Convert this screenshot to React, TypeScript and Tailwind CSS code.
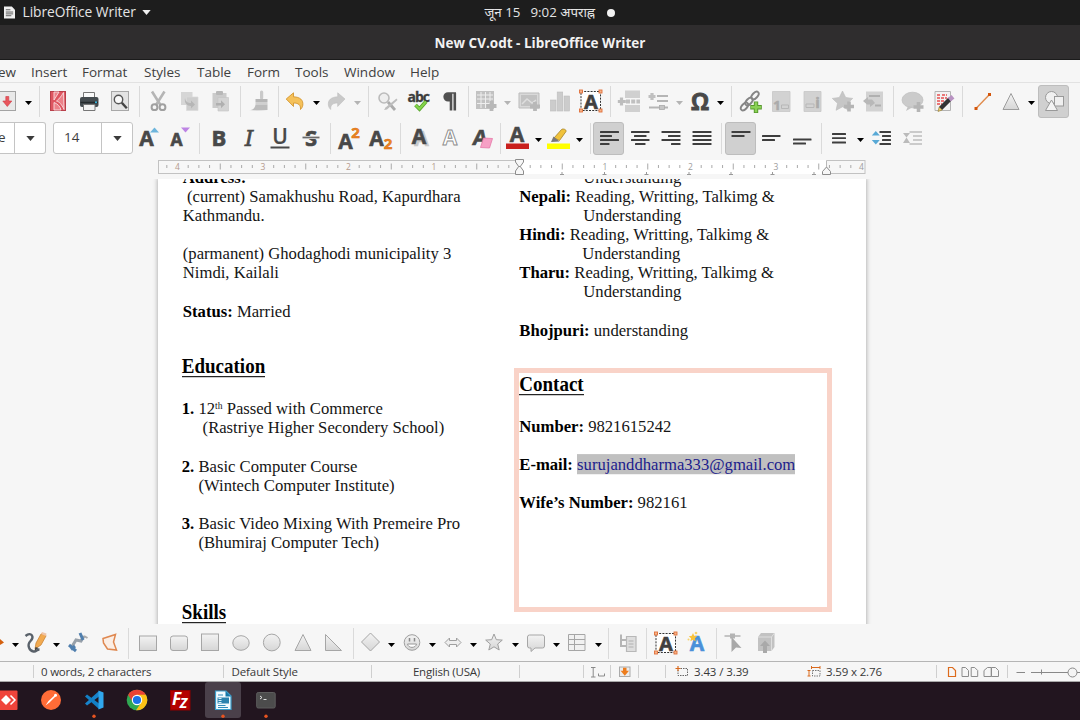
import React from "react";

type Kids = { children?: React.ReactNode; className?: string };

const UI = "font-['Open_Sans','Noto_Sans',sans-serif]";

function Icon({ children, className = "" }: Kids) {
  return (
    <svg viewBox="0 0 24 24" className={`mt-1 h-6 w-6 shrink-0 overflow-visible ${className}`} fill="none">
      {children}
    </svg>
  );
}

function Sep({ className = "" }: Kids) {
  return <span className={`mt-px h-[31px] w-px shrink-0 bg-[#dadada] ${className}`} />;
}

function Drop({ className = "", dim = false }: Kids & { dim?: boolean }) {
  return (
    <svg viewBox="0 0 8 24" className={`mt-1 h-6 w-2 shrink-0 ${className}`}>
      <path d="M1 12h7L4.500 16z" fill={dim ? "#b4b4b4" : "#000"} />
    </svg>
  );
}

function Pressed({ children, className = "" }: Kids) {
  return (
    <span className={`flex h-[33px] w-[31px] shrink-0 justify-center rounded-[3px] border border-[#bdbdbd] bg-[#d0d0d0] ${className}`}>
      {children}
    </span>
  );
}

function Glyph({ x, y, size, fill = "#484848", children, ...rest }: { x: number; y: number; size: number; fill?: string; children: React.ReactNode } & React.SVGProps<SVGTextElement>) {
  return (
    <text x={x} y={y} fontSize={size} fill={fill} stroke={fill} strokeWidth=".6" fontWeight="700" textAnchor="middle" fontFamily="'Open Sans', 'DejaVu Sans', sans-serif" {...rest}>
      {children}
    </text>
  );
}

function Bars({ rows }: { rows: [number, number, number][] }) {
  return (
    <>
      {rows.map(([x, y, w]) => (
        <rect key={y} x={x} y={y} width={w} height="1.9" rx=".5" fill="#3e3e3e" />
      ))}
    </>
  );
}

function TextBoxIcon({ className = "" }: Kids) {
  return (
    <Icon className={className}>
      <rect x="2" y="2.500" width="19.500" height="19" fill="#fff" stroke="#333" strokeDasharray="2 1.200" />
      <Glyph x={12} y={19.500} size={20} fill="#404040">A</Glyph>
      {[[2, 2.5], [21.5, 2.5], [2, 21.5], [21.5, 21.500]].map(([x, y]) => (
        <rect key={`${x}-${y}`} x={x - 1.5} y={y - 1.5} width="3" height="3" fill="#f6b48a" stroke="#e0703a" strokeWidth=".9" />
      ))}
    </Icon>
  );
}

function StandardToolbar() {
  return (
    <div className="flex h-[37px] shrink-0 items-start pt-0.5">
      <Icon className="-ml-1">
        <rect x="3" y="2.500" width="16.500" height="19" fill="#e9e9e9" stroke="#a3a3a3" />
        <path d="M9.800 7.500h3v4.500h3L11.300 17.500 6.800 12h3z" fill="#e8555c" stroke="#cf3a44" strokeWidth=".6" />
      </Icon>
      <Drop className="ml-1" />
      <Sep className="ml-[7px]" />
      <Icon className="ml-1.5">
        <rect x="4.500" y="2.500" width="15" height="19" fill="#de5560" stroke="#b9404b" />
        <path d="M8 3v8l5-8zM8 13.500V21h7c-.5-3-3.500-6.500-7-7.500zM17.500 3.500c-3 5-5 7-7 8.500 3 1 5 3 7.500 8.500z" fill="#f08d94" stroke="#fff" strokeWidth=".9" opacity=".8" />
      </Icon>
      <Icon className="ml-[7px]">
        <path d="M6.500 9V3.500h11V9" fill="#fafafa" stroke="#777" />
        <rect x="3" y="8" width="18.500" height="10" rx="2" fill="#454c50" />
        <path d="M3.500 13.500h17.500" stroke="#252a2c" strokeWidth="1.500" />
        <path d="M6.500 15.500h11.500v6H6.500z" fill="#f2f2f2" stroke="#777" />
        <circle cx="19" cy="13.300" r="1" fill="#38c3ee" />
      </Icon>
      <Icon className="ml-[7px]">
        <rect x="3.500" y="2.500" width="17" height="19" fill="#e4e4e4" stroke="#a8a8a8" />
        <circle cx="10.500" cy="10.500" r="4.200" fill="#fafafa" stroke="#555" strokeWidth="1.400" />
        <path d="m13.800 13.800 5 5.500" stroke="#444" strokeWidth="2.400" />
      </Icon>
      <Sep className="ml-[7px]" />
      <Icon className="ml-1.5">
        <path d="M6 2.500 14.500 16M18.500 2.500 10 16" stroke="#b5b5b5" strokeWidth="2.600" />
        <circle cx="8.500" cy="18.200" r="2.900" stroke="#a0a0a0" strokeWidth="2" />
        <circle cx="16.500" cy="18.200" r="2.900" stroke="#a0a0a0" strokeWidth="2" />
      </Icon>
      <Icon className="ml-2">
        <path d="M3 3h11.500v13H3z" fill="#d6d6d6" />
        <path d="M8.500 8h11.500v13.500H8.500z" fill="#cdcdcd" stroke="#dadada" strokeWidth=".7" />
        <path d="M7 9c.5 4 3 5 6 5v-2.500l4 4-4 4V17c-4 0-7-3-6-8z" fill="#b6b6b6" />
      </Icon>
      <Icon className="ml-1.5">
        <path d="M4.500 4h14v15h-14z" fill="#cbcbcb" />
        <rect x="8" y="2" width="7" height="4" rx="1" fill="#b8b8b8" />
        <path d="M10 8.500h10.500V22H10z" fill="#d4d4d4" stroke="#c2c2c2" strokeWidth=".6" />
        <path d="M8 14h5v-2.800l4 4-4 4v-2.700H8z" fill="#b0b0b0" />
      </Icon>
      <Sep className="ml-2" />
      <Icon className="ml-[7px]">
        <rect x="12" y="1.500" width="3.200" height="9" rx="1.500" fill="#c9c9c9" />
        <path d="M7.500 10h12v3h-12z" fill="#b6b6b6" />
        <path d="M7.500 13h12v2.500h-12z" fill="#d0d0d0" />
        <path d="M7.500 15.500h12V21H3c3-1 4-2.500 4.500-5.500z" fill="#bcbcbc" />
        <path d="M1 22c7-1 12-1 18.500 0z" fill="#d8d8d8" />
      </Icon>
      <Sep className="ml-1.5" />
      <Icon className="ml-1">
        <path d="M3.200 10 10.500 3.800v4C17 8 20.500 11 19.800 16.200c-.3 1.800-1 3-2.300 4.300.3-4.500-2-6.500-7-6.500v3.500z" fill="#f5c15a" stroke="#cf8e22" strokeWidth=".8" />
      </Icon>
      <Drop className="ml-[5px]" />
      <Icon className="ml-1">
        <path d="M21 10 13.700 3.800v4C7.200 8 3.700 11 4.400 16.200c.3 1.800 1 3 2.300 4.300-.3-4.500 2-6.500 7-6.500v3.500z" fill="#c9c9c9" stroke="#bdbdbd" strokeWidth=".6" />
      </Icon>
      <Drop className="ml-[5px]" dim />
      <Sep className="ml-[7px]" />
      <Icon className="ml-[7px]">
        <circle cx="8" cy="9" r="5" fill="#eee" stroke="#bbb" strokeWidth="1.600" />
        <path d="m12 13 7 8" stroke="#ababab" strokeWidth="2.800" />
        <path d="M20.500 9.500 9.500 18.500l-1.500 2.500 3-.5L21.500 11z" fill="#bdbdbd" />
      </Icon>
      <Icon className="ml-1.5">
        <Glyph x={12.200} y={13} size={14} fill="#3c3c3c" letterSpacing="-1" strokeWidth=".3">abc</Glyph>
        <path d="m9.500 16 4 4L20 12.500" stroke="#58a52e" strokeWidth="3.800" />
        <path d="m9.500 16 4 4L20 12.500" stroke="#84d44b" strokeWidth="2.200" />
      </Icon>
      <Icon className="ml-[7px]">
        <path d="M17.800 4v17.500M14 4v17.500" stroke="#505050" strokeWidth="2.600" />
        <path d="M19 3.200H11a4.600 4.600 0 0 0 0 9.300h3V4.800h5z" fill="#505050" />
      </Icon>
      <Sep className="ml-[7px]" />
      <Icon className="ml-[5px]">
        <path d="M2 2h18v18H2z" fill="#c2c2c2" />
        <path d="M3 6h16M3 10h16M3 14.500h16M7 3v16M11.500 3v16M16 3v16" stroke="#eee" />
        <path d="M17.500 12v10M12.500 17h10" stroke="#b8b8b8" strokeWidth="3.800" />
      </Icon>
      <Drop className="ml-[5px]" dim />
      <Icon className="ml-1.5">
        <path d="M2 4h20v15H2z" fill="#d9d9d9" stroke="#bbb" />
        <path d="M4 6h16v11H4z" fill="#c2c2c2" />
        <path d="m5 15 5-5 5 4 4-3" stroke="#dedede" strokeWidth="1.500" />
        <path d="M18 13v9M13 17.500h10" stroke="#b8b8b8" strokeWidth="3.800" />
      </Icon>
      <Icon className="ml-[7px]">
        <rect x="2.500" y="11" width="5.500" height="11" fill="#ccc" stroke="#bdbdbd" strokeWidth=".6" />
        <rect x="9.200" y="3" width="5.500" height="19" fill="#ccc" stroke="#bdbdbd" strokeWidth=".6" />
        <rect x="16" y="7" width="5.500" height="15" fill="#ccc" stroke="#bdbdbd" strokeWidth=".6" />
      </Icon>
      <TextBoxIcon className="ml-[7px]" />
      <Sep className="ml-[7px]" />
      <Icon className="ml-1.5">
        <path d="M8 1.500h15V9H8zM8 16h15v7H8z" fill="#d0d0d0" />
        <path d="M9 12.500h14" stroke="#c0c0c0" strokeWidth="4" strokeDasharray="4 1.200" />
        <path d="M4.500 8.500v8M.8 12.500h8" stroke="#bdbdbd" strokeWidth="3.200" />
      </Icon>
      <Icon className="ml-[5px]">
        <path d="M11 7h11M11 12h11M3 18.500h19" stroke="#b5b5b5" strokeWidth="2" />
        <path d="M6 4v7M2.500 7.500h7" stroke="#c0c0c0" strokeWidth="3.200" />
        <rect x="13.500" y="16.500" width="5" height="4" fill="#c5c5c5" stroke="#aaa" strokeWidth=".8" />
      </Icon>
      <Drop className="ml-[5px]" dim />
      <Icon className="ml-[5px]">
        <Glyph x={12} y={21} size={23} strokeWidth=".8">Ω</Glyph>
      </Icon>
      <Drop className="ml-1" />
      <Sep className="ml-[7px]" />
      <Icon className="ml-1.5">
        {[[6.5, 17.5], [11, 12.5], [17, 6.500]].map(([x, y]) => (
          <ellipse key={x} cx={x} cy={y} rx="4.600" ry="2.600" transform={`rotate(-48 ${x} ${y})`} stroke="#858585" strokeWidth="1.900" />
        ))}
        <path d="M18 12.500V24M12.300 18.200h11.500" stroke="#55962c" strokeWidth="4.400" />
        <path d="M18 13.300v9.900M13 18.200h10" stroke="#8ad155" strokeWidth="2.600" />
      </Icon>
      <Icon className="ml-[7px]">
        <path d="M3.500 2.500H21v20H3.500z" fill="#d2d2d2" stroke="#c6c6c6" strokeWidth=".8" />
        <Glyph x={8} y={21} size={13} fill="#ababab">1</Glyph>
        <path d="M12.500 16h7v3.500h-7z" stroke="#b7b7b7" />
      </Icon>
      <Icon className="ml-[7px]">
        <path d="M4 2.500h17v20H4z" fill="#d2d2d2" stroke="#c6c6c6" strokeWidth=".8" />
        <path d="M6 15h8v3.500H6z" stroke="#b7b7b7" />
        <Glyph x={17.500} y={19} size={15} fill="#ababab">i</Glyph>
      </Icon>
      <Icon className="ml-[7px]">
        <path d="m11.500 2 3.200 6.500 7 .9-5.200 4.900 1.400 7-6.400-3.500-6.400 3.500 1.400-7-5.200-4.900 7-.9z" fill="#c6c6c6" stroke="#bbb" strokeWidth=".6" />
        <path d="M18 12.500v10M13 17.500h10" stroke="#b5b5b5" strokeWidth="3.600" />
      </Icon>
      <Icon className="ml-[7px]">
        <path d="M4 2.500h17v20H4z" fill="#d2d2d2" />
        <path d="M7 7h11M13 16.500h6" stroke="#b0b0b0" strokeWidth="2" />
        <path d="m1 12 5-4v2.500h4l3 3.500-5 4v-2.500H5z" fill="#b8b8b8" />
      </Icon>
      <Sep className="ml-[7px]" />
      <Icon className="ml-1.5">
        <ellipse cx="12.500" cy="11" rx="10.500" ry="7.800" fill="#cbcbcb" stroke="#bdbdbd" strokeWidth=".7" />
        <path d="m8 17-2 5 7-4z" fill="#c4c4c4" />
        <path d="M18.500 13v10M13.500 18h10" stroke="#b5b5b5" strokeWidth="3.600" />
      </Icon>
      <Icon className="ml-2">
        <path d="M3 2.500h15.500v19H3z" fill="#f3f3f3" stroke="#b4b4b4" />
        <path d="M5 6h3M10 6h5M5 9h10M5 12h8M5 15h5" stroke="#e85050" strokeWidth="1.300" strokeDasharray="3 1" />
        <path d="M8.500 19.500 18 10" stroke="#333" strokeWidth="4.500" />
        <path d="m17.300 10.700 3.700-3" stroke="#b892c2" strokeWidth="4.500" />
        <path d="m6 22.500 1.200-4.500 3 3z" fill="#efcf6a" stroke="#8b7431" strokeWidth=".6" />
      </Icon>
      <Sep className="ml-1.5" />
      <Icon className="ml-[7px]">
        <path d="M6 19.500 19.500 5.500" stroke="#e08b4c" strokeWidth="1.400" />
        <rect x="4.500" y="18" width="3" height="3" fill="#d4560b" />
        <rect x="18" y="4" width="3" height="3" fill="#d4560b" />
      </Icon>
      <Icon className="ml-[5px]">
        <path d="M12 4.500 20 20.500H4z" fill="url(#shape)" stroke="#9d9d9d" />
      </Icon>
      <Drop className="ml-1" />
      <Pressed className="ml-[3px]">
        <Icon>
          <circle cx="9.500" cy="7.500" r="6" fill="#f0f0f0" stroke="#999" />
          <rect x="12.500" y="6.500" width="9" height="9.500" fill="#f0f0f0" stroke="#999" />
          <path d="m9.500 10 6 10.500h-12z" fill="#f4f4f4" stroke="#999" />
        </Icon>
      </Pressed>
    </div>
  );
}

function FormattingToolbar() {
  return (
    <div className={`flex h-[37px] shrink-0 items-start pt-0.5 text-[13.500px] text-[#3d3d3d] ${UI}`}>
      <div className="flex h-8 w-[46px] shrink-0 items-center rounded-r-[3px] border border-l-0 border-[#c4c4c4] bg-white">
        <span className="flex h-full w-[15px] items-center border-r border-[#c4c4c4] pb-px">
          <span className="-ml-[2px]">e</span>
        </span>
        <span className="flex flex-1 justify-center"><svg viewBox="0 0 10 6" className="h-[5px] w-[9px]"><path d="M0 0h10L5 6z" fill="#3b3b3b" /></svg></span>
      </div>
      <div className="ml-[7px] flex h-8 w-20 shrink-0 items-center rounded-[3px] border border-[#c4c4c4] bg-white">
        <span className="flex h-full w-[48px] items-center border-r border-[#c4c4c4] pb-px pl-2.5">14</span>
        <span className="flex flex-1 justify-center"><svg viewBox="0 0 10 6" className="h-[5px] w-[9px]"><path d="M0 0h10L5 6z" fill="#3b3b3b" /></svg></span>
      </div>
      <Icon className="ml-1">
        <Glyph x={9.500} y={19.500} size={21}>A</Glyph>
        <path d="m17.500 1.500 4.500 5h-9z" fill="#6db5dc" />
      </Icon>
      <Icon className="ml-[7px]">
        <Glyph x={8.500} y={19.500} size={17.500}>A</Glyph>
        <path d="m17.500 6.500 4.500-5h-9z" fill="#bd84e4" />
      </Icon>
      <Sep className="ml-[7px]" />
      <Icon className="ml-[7px]"><Glyph x={12} y={20} size={22} strokeWidth=".7">B</Glyph></Icon>
      <Icon className="ml-1.5">
        <Glyph x={12} y={20} size={22} fontFamily="'DejaVu Serif', serif" fontStyle="italic" fontWeight="400" strokeWidth=".6">I</Glyph>
      </Icon>
      <Icon className="ml-[7px]">
        <Glyph x={12} y={18} size={21} fontWeight="600" strokeWidth=".2">U</Glyph>
        <path d="M2.500 21.500h19" stroke="#484848" strokeWidth="2" />
      </Icon>
      <Icon className="ml-[7px]">
        <Glyph x={12} y={20} size={22}>S</Glyph>
        <path d="M3.500 11.500h17" stroke="#f7f7f7" strokeWidth="3" />
        <path d="M3.500 11.500h17" stroke="#6a6a6a" strokeWidth="1.800" />
      </Icon>
      <Sep className="ml-[7px]" />
      <Icon className="ml-1.5">
        <Glyph x={8.500} y={22.500} size={21}>A</Glyph>
        <Glyph x={18.500} y={12} size={15} fill="#ee8625" stroke="#d66d10" strokeWidth=".5">2</Glyph>
      </Icon>
      <Icon className="ml-2">
        <Glyph x={7.500} y={19.500} size={21}>A</Glyph>
        <Glyph x={19} y={22.500} size={15} fill="#ee8625" stroke="#d66d10" strokeWidth=".5">2</Glyph>
      </Icon>
      <Sep className="ml-[7px]" />
      <Icon className="ml-[7px]">
        <Glyph x={13.500} y={20} size={21} fill="#c9c9c9">A</Glyph>
        <Glyph x={11} y={18} size={21}>A</Glyph>
      </Icon>
      <Icon className="ml-1.5"><Glyph x={12} y={19} size={21} fill="#fff" stroke="#8b8b8b" strokeWidth=".9">A</Glyph></Icon>
      <Icon className="ml-2">
        <Glyph x={10} y={19} size={21} transform="skewX(-8) translate(2 0)">A</Glyph>
        <path d="m13.500 12 9 .5-3 9.500-9-.5z" fill="#f6a0c5" stroke="#e678a8" strokeWidth=".8" />
      </Icon>
      <Sep className="ml-1.5" />
      <Icon className="ml-1">
        <Glyph x={12} y={16} size={21}>A</Glyph>
        <path d="M1 17.500h23v5.500H1z" fill="#c9211e" />
      </Icon>
      <Drop className="ml-[5px]" />
      <Icon className="ml-[5px]">
        <path d="M7 12 14.500 3.500c1-1 5-.5 4.500 2L12.500 14.500z" fill="#f0c23b" stroke="#a3822a" strokeWidth=".8" />
        <path d="m4 16 2.500-5.500 6 5z" fill="#777" />
        <path d="M0 17.500h23V23H0z" fill="#ff0" />
      </Icon>
      <Drop className="ml-1" />
      <Sep className="ml-[7px]" />
      <Pressed className="ml-0.5"><Icon><Bars rows={[[3, 4, 19], [3, 8, 12], [3, 12, 19], [3, 16, 9.500]]} /></Icon></Pressed>
      <Icon className="ml-1"><Bars rows={[[3, 5, 18.5], [6, 9, 12.5], [3, 13, 18.5], [7, 17, 10.500]]} /></Icon>
      <Icon className="ml-[7px]"><Bars rows={[[2.500, 5, 19], [9, 9, 12.5], [2.500, 13, 19], [12, 17, 9.500]]} /></Icon>
      <Icon className="ml-[7px]"><Bars rows={[[2.500, 5, 19], [2.500, 9, 19], [2.500, 13, 19], [2.500, 17, 19]]} /></Icon>
      <Sep className="ml-[7px]" />
      <Pressed className="ml-[3px]"><Icon><Bars rows={[[2.500, 4, 19], [2.500, 8, 13]]} /></Icon></Pressed>
      <Icon className="ml-[3px]"><Bars rows={[[3, 9, 18.5], [3, 13, 13]]} /></Icon>
      <Icon className="ml-[7px]"><Bars rows={[[3, 12.5, 18.5], [3, 16.5, 13]]} /></Icon>
      <Sep className="ml-[7px]" />
      <Icon className="ml-[5px]"><Bars rows={[[5, 7, 14], [5, 11.2, 14], [5, 15.500, 14]]} /></Icon>
      <Drop className="ml-[5px]" />
      <Icon className="ml-1.5">
        <path d="m5.800 5 4 4.500h-8zM5.800 18.500l4-4.500h-8z" fill="#58a9d6" />
        <Bars rows={[[9.500, 5, 11.500], [12, 9, 9], [12, 13, 9], [9.500, 17, 11.500]]} />
      </Icon>
      <Icon className="ml-1.5">
        <path d="M3 7h7l-3.500 4.500L10 17H3l3.500-5.500z" fill="#bbb" />
        <path d="M9.500 6H22M13 10h9M13 14h9M9.500 18H22" stroke="#bdbdbd" strokeWidth="1.700" />
      </Icon>
    </div>
  );
}

function Ruler() {
  const origin = 362.5;
  const step = 85.5;
  const ticks = [];
  for (let i = -33; i <= 32; i++) {
    if (i % 8 === 0) continue;
    ticks.push({ x: origin + (i * step) / 8, half: i % 4 === 0 });
  }
  return (
    <svg viewBox="0 0 709 21" className="ml-[157px] h-[21px] w-[709px] shrink-0" fill="none">
      <rect x="1.500" y="3.500" width="706.500" height="13" fill="#f7f7f7" stroke="#c2c2c2" />
      <rect x="362" y="3" width="307.500" height="14" fill="#fff" />
      {ticks.map((t) => (
        <path key={t.x} d={t.half ? `M${t.x} 6.500v6` : `M${t.x} 8v3`} stroke="#a9a9a9" />
      ))}
      {[-4, -3, -2, -1, 1, 2, 3, 4].map((n) => (
        <text key={n} x={origin + n * step} y="12.800" fontSize="8.500" fill={n < 0 ? "#b59a8c" : "#9d9d9d"} textAnchor="middle" fontFamily="'Open Sans', sans-serif">
          {Math.abs(n)}
        </text>
      ))}
      {[405, 447.5, 489.5, 532, 574, 615.5, 657].map((x) => (
        <path key={x} d={`M${x} 15v2.500M${x - 2} 17.500h4`} stroke="#999" />
      ))}
      <path d="M358.500 2.500h8v2.500l-3.200 4.500h-1.600L358.500 5zM358.500 17.500h8V14l-3.200-4.500h-1.600L358.500 14zM665.500 17.500h8v-3l-4-4.500-4 4.500z" fill="#f7f7f7" stroke="#8c8c8c" />
      <path d="M669.500 3.500V10" stroke="#b9b9b9" />
    </svg>
  );
}

function Line({ children, className = "" }: Kids) {
  return <p className={`origin-[0_15px] scale-y-[1.06] whitespace-pre ${className}`}>{children}</p>;
}

function Heading({ children, className = "" }: Kids) {
  return (
    <h2 className={`origin-[0_17px] scale-y-[1.05] text-[19px] leading-[22px] font-bold text-black ${className}`}>
      <span className="inline-block border-b-[1.500px] border-black leading-[18px]">{children}</span>
    </h2>
  );
}

const B = ({ children }: Kids) => <b className="font-bold text-black">{children}</b>;

function DocumentArea() {
  return (
    <div className="h-[445px] shrink-0 overflow-hidden pl-[158px]">
      <div className="flex h-[500px] w-[708px] bg-white font-['Liberation_Serif','Times_New_Roman',serif] text-[16.650px] leading-[19.150px] text-[#151515] shadow-[0_0_4px_1px_#b8b8b8]">
        <div className="-mt-[11.500px] w-[356px] pl-[24.800px]">
          <Line><B>Address:</B></Line>
          <Line> (current) Samakhushu Road, Kapurdhara</Line>
          <Line>Kathmandu.</Line>
          <Line className="mt-[19.150px]">(parmanent) Ghodaghodi municipality 3</Line>
          <Line>Nimdi, Kailali</Line>
          <Line className="mt-[19.150px]"><B>Status:</B> Married</Line>
          <Heading className="mt-[35.500px] -ml-px">Education</Heading>
          <div className="-ml-px">
            <Line className="mt-[20.500px] mb-[0.500px]"><B>1.</B> 12<sup className="relative -top-[5px] align-baseline text-[9.500px] leading-none">th</sup> Passed with Commerce</Line>
            <Line>{"     (Rastriye Higher Secondery School)"}</Line>
            <Line className="mt-[19.150px]"><B>2.</B> Basic Computer Course</Line>
            <Line>{"    (Wintech Computer Institute)"}</Line>
            <Line className="mt-[19.150px]"><B>3.</B> Basic Video Mixing With Premeire Pro</Line>
            <Line>{"    (Bhumiraj Computer Tech)"}</Line>
          </div>
          <Heading className="mt-[50px] -ml-px">Skills</Heading>
        </div>
        <div className="-mt-[11.500px] w-[320px]">
          <div className="pl-[5.300px]">
            <Line className="pl-[64px]">Understanding</Line>
            <Line><B>Nepali:</B> Reading, Writting, Talkimg &amp;</Line>
            <Line className="pl-[64px]">Understanding</Line>
            <Line><B>Hindi:</B> Reading, Writting, Talkimg &amp;</Line>
            <Line className="pl-[63px]">Understanding</Line>
            <Line><B>Tharu:</B> Reading, Writting, Talkimg &amp;</Line>
            <Line className="pl-[64px]">Understanding</Line>
            <Line className="mt-[19.150px]"><B>Bhojpuri:</B> understanding</Line>
          </div>
          <div className="mt-[28px] h-[244.500px] w-[317.700px] border-[5.500px] border-[#f9d3c8] pl-[0.300px]">
            <Heading className="mt-[1.500px]">Contact</Heading>
            <Line className="mt-[20.500px]"><B>Number:</B> 9821615242</Line>
            <Line className="mt-[19.150px]"><B>E-mail:</B> <span className="bg-[#c0c0c0] text-[#1c1c8c]">surujanddharma333@gmail.com</span></Line>
            <Line className="mt-[19.150px]"><B>Wife’s Number:</B> 982161</Line>
          </div>
        </div>
      </div>
    </div>
  );
}

function DrawingToolbar() {
  return (
    <div className="flex h-[37px] shrink-0 items-start pt-[3px]">
      <svg viewBox="0 0 4 24" className="mt-1 h-6 w-1 shrink-0"><path d="m0 8 4 3.500L0 14z" fill="#d4600f" /></svg>
      <Drop className="ml-[7px]" />
      <Icon className="ml-[5px]">
        <path d="M1.500 5c6-5 9 1 5 5s-1 10 3 10.500c3 .5 3-2 6-2" stroke="#59616a" strokeWidth="2.400" />
        <path d="m11 18 1-6 5-9c1-1 5 0 5 2l-5 9z" fill="#f2aa50" stroke="#c47b2a" strokeWidth=".7" />
        <path d="m17 3 5 2 .5-2.500L18 1z" fill="#efc4a8" />
        <path d="m10.500 20 1-4 3 1z" fill="#444" />
      </Icon>
      <Drop className="ml-1" />
      <Icon className="ml-1.5">
        <path d="M6 15.500 10 9l5 1 3-5" stroke="#98a1aa" strokeWidth="3" />
        <path d="m3 14 7 6M5 18.500 9 15M14 2l3 7" stroke="#507fae" strokeWidth="3" />
        <path d="m18 5 3.500 2" stroke="#aaa" strokeWidth="2" />
      </Icon>
      <Icon className="ml-2"><path d="M5 7.500 17.500 3.500 15.500 11l3 8-9-1-4-6z" fill="#fbeee5" stroke="#df8850" strokeWidth="1.500" /></Icon>
      <Sep className="ml-1.5" />
      <Icon className="ml-[7px]"><rect x="3.500" y="5" width="17" height="14.500" fill="url(#shape)" stroke="#a6a6a6" /></Icon>
      <Icon className="ml-[7px]"><rect x="3.500" y="5" width="17" height="14.500" rx="2.500" fill="url(#shape)" stroke="#a6a6a6" /></Icon>
      <Icon className="ml-[7px]"><rect x="3.500" y="3" width="17" height="16.500" fill="url(#shape)" stroke="#a6a6a6" /></Icon>
      <Icon className="ml-[7px]"><ellipse cx="12" cy="12" rx="8.200" ry="7.300" fill="url(#shape)" stroke="#a6a6a6" /></Icon>
      <Icon className="ml-[7px]"><circle cx="11.800" cy="11.500" r="8.400" fill="url(#shape)" stroke="#a6a6a6" /></Icon>
      <Icon className="ml-[7px]"><path d="m12 3.500 8 16H4z" fill="url(#shape)" stroke="#a6a6a6" /></Icon>
      <Icon className="ml-[7px]"><path d="M3.500 3.500v16h16z" fill="url(#shape)" stroke="#a6a6a6" /></Icon>
      <Sep className="ml-[7px]" />
      <Icon className="ml-1"><path d="m12.500 2 9 9-9 9-9-9z" fill="url(#shape)" stroke="#a6a6a6" /></Icon>
      <Drop className="ml-[5px]" />
      <Icon className="ml-[5px]">
        <circle cx="12" cy="11.500" r="7.800" fill="url(#shape)" stroke="#9f9f9f" />
        <path d="M9.500 7v3.500M14.500 7v3.500" stroke="#888" strokeWidth="1.500" />
        <path d="M7.500 13h9c-1 4.500-8 4.500-9 0z" fill="#fff" stroke="#999" />
      </Icon>
      <Drop className="ml-1" />
      <Icon className="ml-[5px]"><path d="m4 11.500 4.500-4.500v2.500h7V7l4.500 4.500-4.500 4.500v-2.500h-7V16z" fill="#eee" stroke="#9f9f9f" /></Icon>
      <Drop className="ml-1" />
      <Icon className="ml-[5px]"><path d="m12 3 2.300 5.700 6 .4-4.600 3.900 1.500 6-5.200-3.200L6.800 19l1.500-6-4.600-3.900 6-.4z" fill="url(#shape)" stroke="#9f9f9f" /></Icon>
      <Drop className="ml-[5px]" />
      <Icon className="ml-[5px]"><path d="M5.500 4h13a2 2 0 0 1 2 2v9a2 2 0 0 1-2 2H11l-4 3.500V17H5.500a2 2 0 0 1-2-2V6a2 2 0 0 1 2-2z" fill="url(#shape)" stroke="#a6a6a6" /></Icon>
      <Drop className="ml-1" />
      <Icon className="ml-[5px]"><path d="M3.500 3.500h16.500v16H3.500zM9.500 3.500v16M3.500 8.500H20M3.500 13.500H20" fill="#f1f1f1" stroke="#a6a6a6" /></Icon>
      <Drop className="ml-[5px]" />
      <Sep className="ml-1.5" />
      <Icon className="ml-[7px]">
        <path d="M5 3.500V15h5M5 9h5" stroke="#b5b5b5" strokeWidth="2" />
        <path d="M10.500 5.500h9.500v15h-9.500z" fill="#dedede" stroke="#b8b8b8" strokeWidth="1.200" />
        <path d="M12.500 10h5M12.500 13h5M12.500 16h5" stroke="#b0b0b0" />
      </Icon>
      <Sep className="ml-1.5" />
      <TextBoxIcon className="ml-[7px]" />
      <Icon className="ml-[7px]">
        <Glyph x={12} y={19.500} size={21} fill="#4a90d9">A</Glyph>
        <path d="m8 2 1.200 2.800 3 .4-2.200 2 .6 3L8 8.800 5.400 10.200l.6-3-2.200-2 3-.4z" fill="#f8c23a" />
        <circle cx="11" cy="2" r="1.300" fill="#f8d36a" />
        <circle cx="3.500" cy="8.500" r="1" fill="#f8d36a" />
      </Icon>
      <Sep className="ml-[7px]" />
      <Icon className="ml-[5px]">
        <path d="M2.500 5h16" stroke="#c4c4c4" strokeWidth="2" />
        <rect x="8" y="2.500" width="5" height="5" fill="#b4b4b4" />
        <path d="m9.500 6 10 11-5.500-.5L9.500 21z" fill="#a8a8a8" />
      </Icon>
      <Icon className="ml-2">
        <path d="m4 6 3-4h13.500v14l-3 4H4z" fill="#c2c2c2" />
        <path d="M4 6h13.500v14M17.500 6l3-4" stroke="#dedede" />
        <path d="m11 9.500 5 5.500h-3v7H9v-7H6z" fill="#a9a9a9" />
      </Icon>
    </div>
  );
}

function StatusSep({ className = "" }: Kids) {
  return <span className={`h-[13px] w-px shrink-0 bg-[#cfcfcf] ${className}`} />;
}

function StatusBar() {
  return (
    <div className={`flex h-[21px] shrink-0 items-center border-t border-b border-t-[#b5b5b5] border-b-[#a9a9a9] text-[11.500px] whitespace-nowrap text-[#383838] ${UI}`}>
      <StatusSep className="ml-[33px]" />
      <span className="ml-[7px] w-[182px] tracking-[-0.200px]">0 words, 2 characters</span>
      <StatusSep />
      <span className="ml-[7.500px] w-[139.500px] tracking-[-0.100px]">Default Style</span>
      <StatusSep />
      <span className="w-[147px] pl-[2px] text-center tracking-[-0.200px]">English (USA)</span>
      <StatusSep />
      <span className="w-[63px]" />
      <StatusSep />
      <svg viewBox="0 0 26 14" className="h-3.5 w-[26px]" fill="none"><path d="M7 2.500h4.500M7 12h4.500M9.200 2.500V12M14.500 8.500v2.500h6V8.500" stroke="#8a8a8a" /></svg>
      <StatusSep />
      <svg viewBox="0 0 27 14" className="h-3.5 w-[27px]" fill="none">
        <rect x="8.500" y="2" width="10.500" height="9.500" fill="#ececec" stroke="#aaa" />
        <path d="M12 2.800h3.500v3H18l-4.200 5-4.200-5H12z" fill="#ed7d1d" />
      </svg>
      <StatusSep />
      <span className="w-[26px]" />
      <StatusSep />
      <svg viewBox="0 0 28 14" className="h-3.5 w-[28px]" fill="none">
        <rect x="12" y="3.500" width="9.500" height="7" stroke="#666" strokeDasharray="1.500 1" />
        <path d="M9.500 3.500h5M12 1v5" stroke="#d96a1e" strokeWidth="1.200" />
      </svg>
      <span className="w-[112px] tracking-[-0.100px]">3.43 / 3.39</span>
      <svg viewBox="0 0 20 14" className="h-3.5 w-5" fill="none">
        <path d="M5.500 2.500h8.500M5.500 1v3M14 1v3M1.500 5.500h3M1.500 11h3M3 5.500V11" stroke="#d96a1e" />
        <rect x="6.500" y="5.500" width="7.500" height="5.500" stroke="#777" strokeDasharray="1.500 1" />
      </svg>
      <span className="w-[110px] tracking-[-0.150px]">3.59 x 2.76</span>
      <StatusSep />
      <svg viewBox="0 0 70 14" className="h-3.5 w-[70px]" fill="none">
        <path d="M11.500 2.500h4l3 3v6h-7z" stroke="#dd6b1c" strokeWidth="1.200" />
        <path d="M25 2.500h3.500l3 3v6H25zM34.200 2.500h3.500l3 3v6h-6.500zM50.500 2.500h3.700v9h-7.200V5.500zM54.500 2.500h4l3 3v6h-7z" stroke="#8c8c8c" />
      </svg>
      <StatusSep />
      <svg viewBox="0 0 72 14" className="h-3.5 w-[72px] shrink-0" fill="none">
        <path d="M8.500 7.500H17M23 7.500h49M33.500 4.500v5" stroke="#888" />
        <circle cx="64.500" cy="7.500" r="4.500" fill="#f4f4f4" stroke="#8a8a8a" />
      </svg>
    </div>
  );
}

function Task({ children, running = false, active = false }: Kids & { running?: boolean; active?: boolean }) {
  return (
    <div className="flex w-[43px] shrink-0 justify-center">
      <div className={active ? "h-[36px] w-9 rounded-[3px] bg-[#4a404a]" : "h-[36px] w-9"}>
        <svg viewBox="0 0 36 36" className="h-9 w-9" fill="none">
          {children}
          {running && <circle cx="18" cy="34.300" r="1.700" fill="#e95420" />}
        </svg>
      </div>
    </div>
  );
}

function Taskbar() {
  return (
    <div className="-ml-3.5 flex h-[38px] shrink-0 bg-[#22151f]">
      <Task>
        <rect x="8" y="8.500" width="19.500" height="19.500" rx="1" fill="#ef443b" />
        <path d="m16 13 5 5-5 5-5-5z" fill="#fff" />
        <path d="m20.500 13.500 4.500 4.500-4.500 4.500" stroke="#fff" strokeWidth="1.500" />
      </Task>
      <Task>
        <circle cx="18" cy="18" r="10" fill="#ff6c37" />
        <path d="m12.500 23.500 3-4.500 6.500-6 1 1-6.500 6.500z" fill="#fff" />
        <circle cx="22.500" cy="13.300" r="1.500" fill="#fff" />
      </Task>
      <Task running>
        <path d="m23 9-14 12.500 2 2L23 14.500z" fill="#1784cc" />
        <path d="m23 27-14-12.500 2-2L23 21.500z" fill="#1380c5" />
        <path d="m22.500 8.500 5 2v15l-5 2z" fill="#30a7ed" />
      </Task>
      <Task>
        <circle cx="18" cy="18" r="10.300" fill="#30a852" />
        <path d="M9.100 12.800A10.300 10.300 0 0 1 26.900 12.800L18 13.500z" fill="#ea4335" />
        <path d="M9.100 12.800 14 20.500l4-7z" fill="#ea4335" />
        <path d="M26.900 12.800A10.300 10.300 0 0 1 17 28.200L22.500 20 18 12.800z" fill="#fbc116" />
        <circle cx="18" cy="18" r="5.200" fill="#fff" />
        <circle cx="18" cy="18" r="4.100" fill="#1a73e8" />
      </Task>
      <Task>
        <rect x="8.500" y="8.500" width="19.500" height="19.500" fill="#b40000" stroke="#8f0000" />
        <text x="14.500" y="23" fill="#fff" fontSize="17" fontWeight="700" fontStyle="italic" textAnchor="middle" fontFamily="'Open Sans', sans-serif">F</text>
        <text x="21.500" y="26" fill="#fff" fontSize="14" fontWeight="700" fontStyle="italic" textAnchor="middle" fontFamily="'Open Sans', sans-serif">Z</text>
      </Task>
      <Task running active>
        <path d="M10.500 9h10.500l5 5V27.500H10.500z" fill="#f3fbff" stroke="#3c9ecb" strokeWidth="1.200" />
        <path d="M20.500 9v5.500H26z" fill="#1378aa" />
        <path d="M13 13h5M13 23.500h7.500M13 25.500h10" stroke="#318cba" strokeWidth="1.200" />
        <path d="M12.500 15.500h11.500v6H12.500z" fill="#2b82ae" />
        <path d="M13.500 16.500h3M13.500 18.500h3M13.500 20.500h3" stroke="#d8eef8" />
      </Task>
      <Task running>
        <rect x="8.700" y="10.500" width="18.500" height="15.500" rx="1.500" fill="#4c4c4c" stroke="#5d5d5d" />
        <path d="m12 14 2 1.500-2 1.500M15.500 17.500h3" stroke="#eee" strokeWidth=".9" />
      </Task>
    </div>
  );
}

export default function App() {
  return (
    <div className="flex h-[720px] w-[1080px] flex-col overflow-hidden bg-[#f6f6f6]">
      <svg className="absolute h-0 w-0">
        <defs>
          <linearGradient id="shape" x1="0" y1="0" x2="0" y2="1">
            <stop offset="0" stopColor="#f3f3f3" />
            <stop offset="1" stopColor="#d6d6d6" />
          </linearGradient>
        </defs>
      </svg>
      <div className={`flex h-[25px] shrink-0 items-center bg-[#1d1d1d] text-[13.800px] text-[#e4e4e4] ${UI}`}>
        <svg viewBox="0 0 12 14" className="ml-1 h-[13px] w-[11px] shrink-0">
          <path d="M0 .5h8.500L12 4v9.500H0z" fill="#f0f0f0" />
          <path d="M2 4h5M2 6.500h8M2 8.500h8M2 10.500h6" stroke="#555" />
        </svg>
        <span className="ml-[7.500px] w-[115px] shrink-0 tracking-[-0.050px] whitespace-nowrap">LibreOffice Writer</span>
        <svg viewBox="0 0 10 6" className="ml-1 h-[5px] w-[9px] shrink-0"><path d="M0 0h10L5 6z" fill="#f0f0f0" /></svg>
        <span className="ml-[334px] w-[38px] shrink-0 text-[13.300px] whitespace-nowrap">जून 15</span>
        <span className="ml-2 w-[66px] shrink-0 text-[13.300px] whitespace-nowrap">9:02 अपराह्न</span>
        <span className="ml-2.5 h-2 w-2 shrink-0 rounded-full bg-[#f2f2f2]" />
      </div>
      <div className={`flex h-[35px] shrink-0 items-center justify-center border-b border-[#1b1b1b] bg-[#2f2d2e] pt-[3px] text-[13.500px] font-bold text-[#f2f2f2] ${UI}`}>
        <span>New CV.odt - LibreOffice Writer</span>
      </div>
      <div className={`flex h-[23px] shrink-0 items-center border-b border-[#e2e2e2] pt-[3px] text-[13.500px] whitespace-nowrap text-[#404040] ${UI}`}>
        <span className="w-[31px]"><span className="-ml-[2px]">ew</span></span>
        <span className="w-[51px]">Insert</span>
        <span className="w-[62px]">Format</span>
        <span className="w-[53px]">Styles</span>
        <span className="w-[50px]">Table</span>
        <span className="w-[48px]">Form</span>
        <span className="w-[49px]">Tools</span>
        <span className="w-[66px]">Window</span>
        <span>Help</span>
      </div>
      <StandardToolbar />
      <FormattingToolbar />
      <div className="flex h-[22px] shrink-0"><Ruler /></div>
      <DocumentArea />
      <DrawingToolbar />
      <StatusBar />
      <Taskbar />
    </div>
  );
}
